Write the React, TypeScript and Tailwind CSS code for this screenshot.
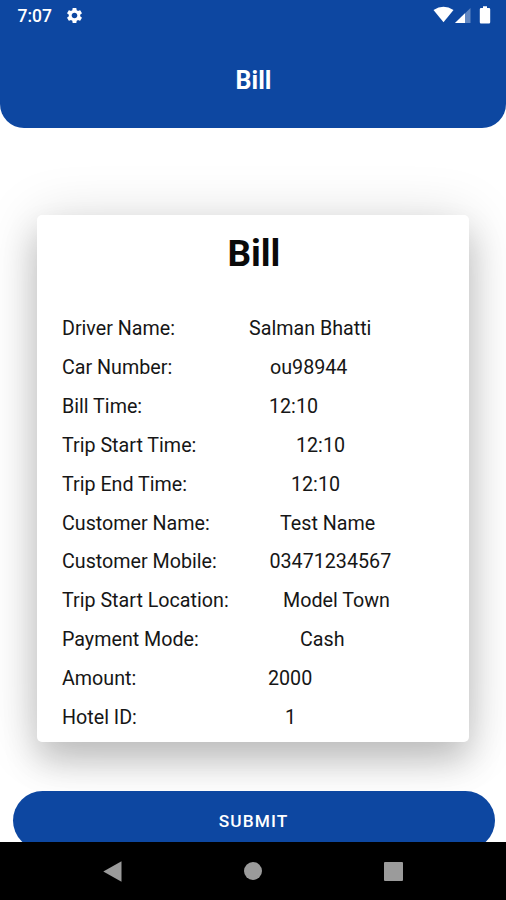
import { MdSettings } from 'react-icons/md';

interface BillRow {
  label: string;
  value: string;
  labelWidth: string;
}

const rows: BillRow[] = [
  { label: 'Driver Name:', value: 'Salman Bhatti', labelWidth: 'w-[187px]' },
  { label: 'Car Number:', value: 'ou98944', labelWidth: 'w-[208px]' },
  { label: 'Bill Time:', value: '12:10', labelWidth: 'w-[207px]' },
  { label: 'Trip Start Time:', value: '12:10', labelWidth: 'w-[234px]' },
  { label: 'Trip End Time:', value: '12:10', labelWidth: 'w-[229px]' },
  { label: 'Customer Name:', value: 'Test Name', labelWidth: 'w-[218px]' },
  { label: 'Customer Mobile:', value: '03471234567', labelWidth: 'w-[207.5px]' },
  { label: 'Trip Start Location:', value: 'Model Town', labelWidth: 'w-[221px]' },
  { label: 'Payment Mode:', value: 'Cash', labelWidth: 'w-[238px]' },
  { label: 'Amount:', value: '2000', labelWidth: 'w-[206px]' },
  { label: 'Hotel ID:', value: '1', labelWidth: 'w-[223px]' },
];

const StatusBar = () => {
  return (
    <div className="flex h-8 items-center justify-between pl-[17.5px] pr-[15.5px]">
      <div className="flex items-center gap-[13px]">
        <span className="text-[17.5px] font-medium leading-8">7:07</span>
        <MdSettings className="-mt-px size-[19px]" />
      </div>
      <div className="flex h-full items-start pt-[6px]">
        <svg className="h-[17px] w-[21px]" viewBox="0 0 21 17" fill="currentColor">
          <path d="M0.5 4Q10.5 -2.5 20.5 4L10.5 16.2Z" />
        </svg>
        <svg className="ml-px mt-px h-[17px] w-4" viewBox="0 0 16 17" fill="currentColor">
          <path d="M0 16L15.5 1V16Z" opacity="0.35" />
          <path d="M0 16L10 6.3V16Z" />
        </svg>
        <svg className="ml-[7.5px] h-[18px] w-3" viewBox="0 0 12 18" fill="currentColor">
          <path d="M4 0.3h4v1.8h2a1.2 1.2 0 0 1 1.2 1.2v13a1.2 1.2 0 0 1-1.2 1.2H2a1.2 1.2 0 0 1-1.2-1.2v-13A1.2 1.2 0 0 1 2 2.1h2z" />
        </svg>
      </div>
    </div>
  );
};

const BillCard = () => {
  return (
    <section className="ml-[37.4px] mt-[87px] h-[526.5px] w-[432px] rounded-[5px] bg-white pl-[24.6px] pt-[15px] text-[#161616] shadow-[0_20px_34px_rgba(0,0,0,0.19),0_4px_56px_rgba(0,0,0,0.15)]">
      <h2 className="-ml-[24.6px] pl-px text-center text-[37px] font-bold leading-[48px] text-[#0a0a0a]">Bill</h2>
      <div className="mt-[31.4px] text-[19.7px]">
        {rows.map((row) => (
          <div key={row.label} className="flex h-[38.9px] items-center whitespace-nowrap">
            <span className={`${row.labelWidth} shrink-0`}>{row.label}</span>
            <span>{row.value}</span>
          </div>
        ))}
      </div>
    </section>
  );
};

const NavigationBar = () => {
  return (
    <nav className="flex h-[58px] shrink-0 items-center justify-between bg-black px-[103px] text-[#9b9b9b]">
      <svg className="h-[21px] w-[19px]" viewBox="0 0 19 21" fill="currentColor">
        <path d="M0.3 10.5L18.5 0.2V20.8Z" />
      </svg>
      <span className="size-[18px] rounded-full bg-[#9b9b9b]" />
      <span className="size-[19px] rounded-[1px] bg-[#9b9b9b]" />
    </nav>
  );
};

const App = () => {
  return (
    <div className="flex h-[900px] w-[506px] flex-col overflow-hidden bg-white font-['Roboto',sans-serif]">
      <main className="h-[842px] shrink-0 overflow-hidden">
        <header className="h-32 rounded-b-[24px] bg-[#0d47a1] text-white">
          <StatusBar />
          <h1 className="pl-px pt-[33px] text-center text-[25px] font-bold leading-8">Bill</h1>
        </header>

        <BillCard />

        <button className="relative ml-[12.5px] mt-[49.5px] block h-[59px] w-[482px] rounded-full bg-[#0d47a1] pt-0.5 text-[17.3px] font-medium tracking-[1.1px] text-white">
          SUBMIT
        </button>
      </main>
      <NavigationBar />
    </div>
  );
};

export default App;
